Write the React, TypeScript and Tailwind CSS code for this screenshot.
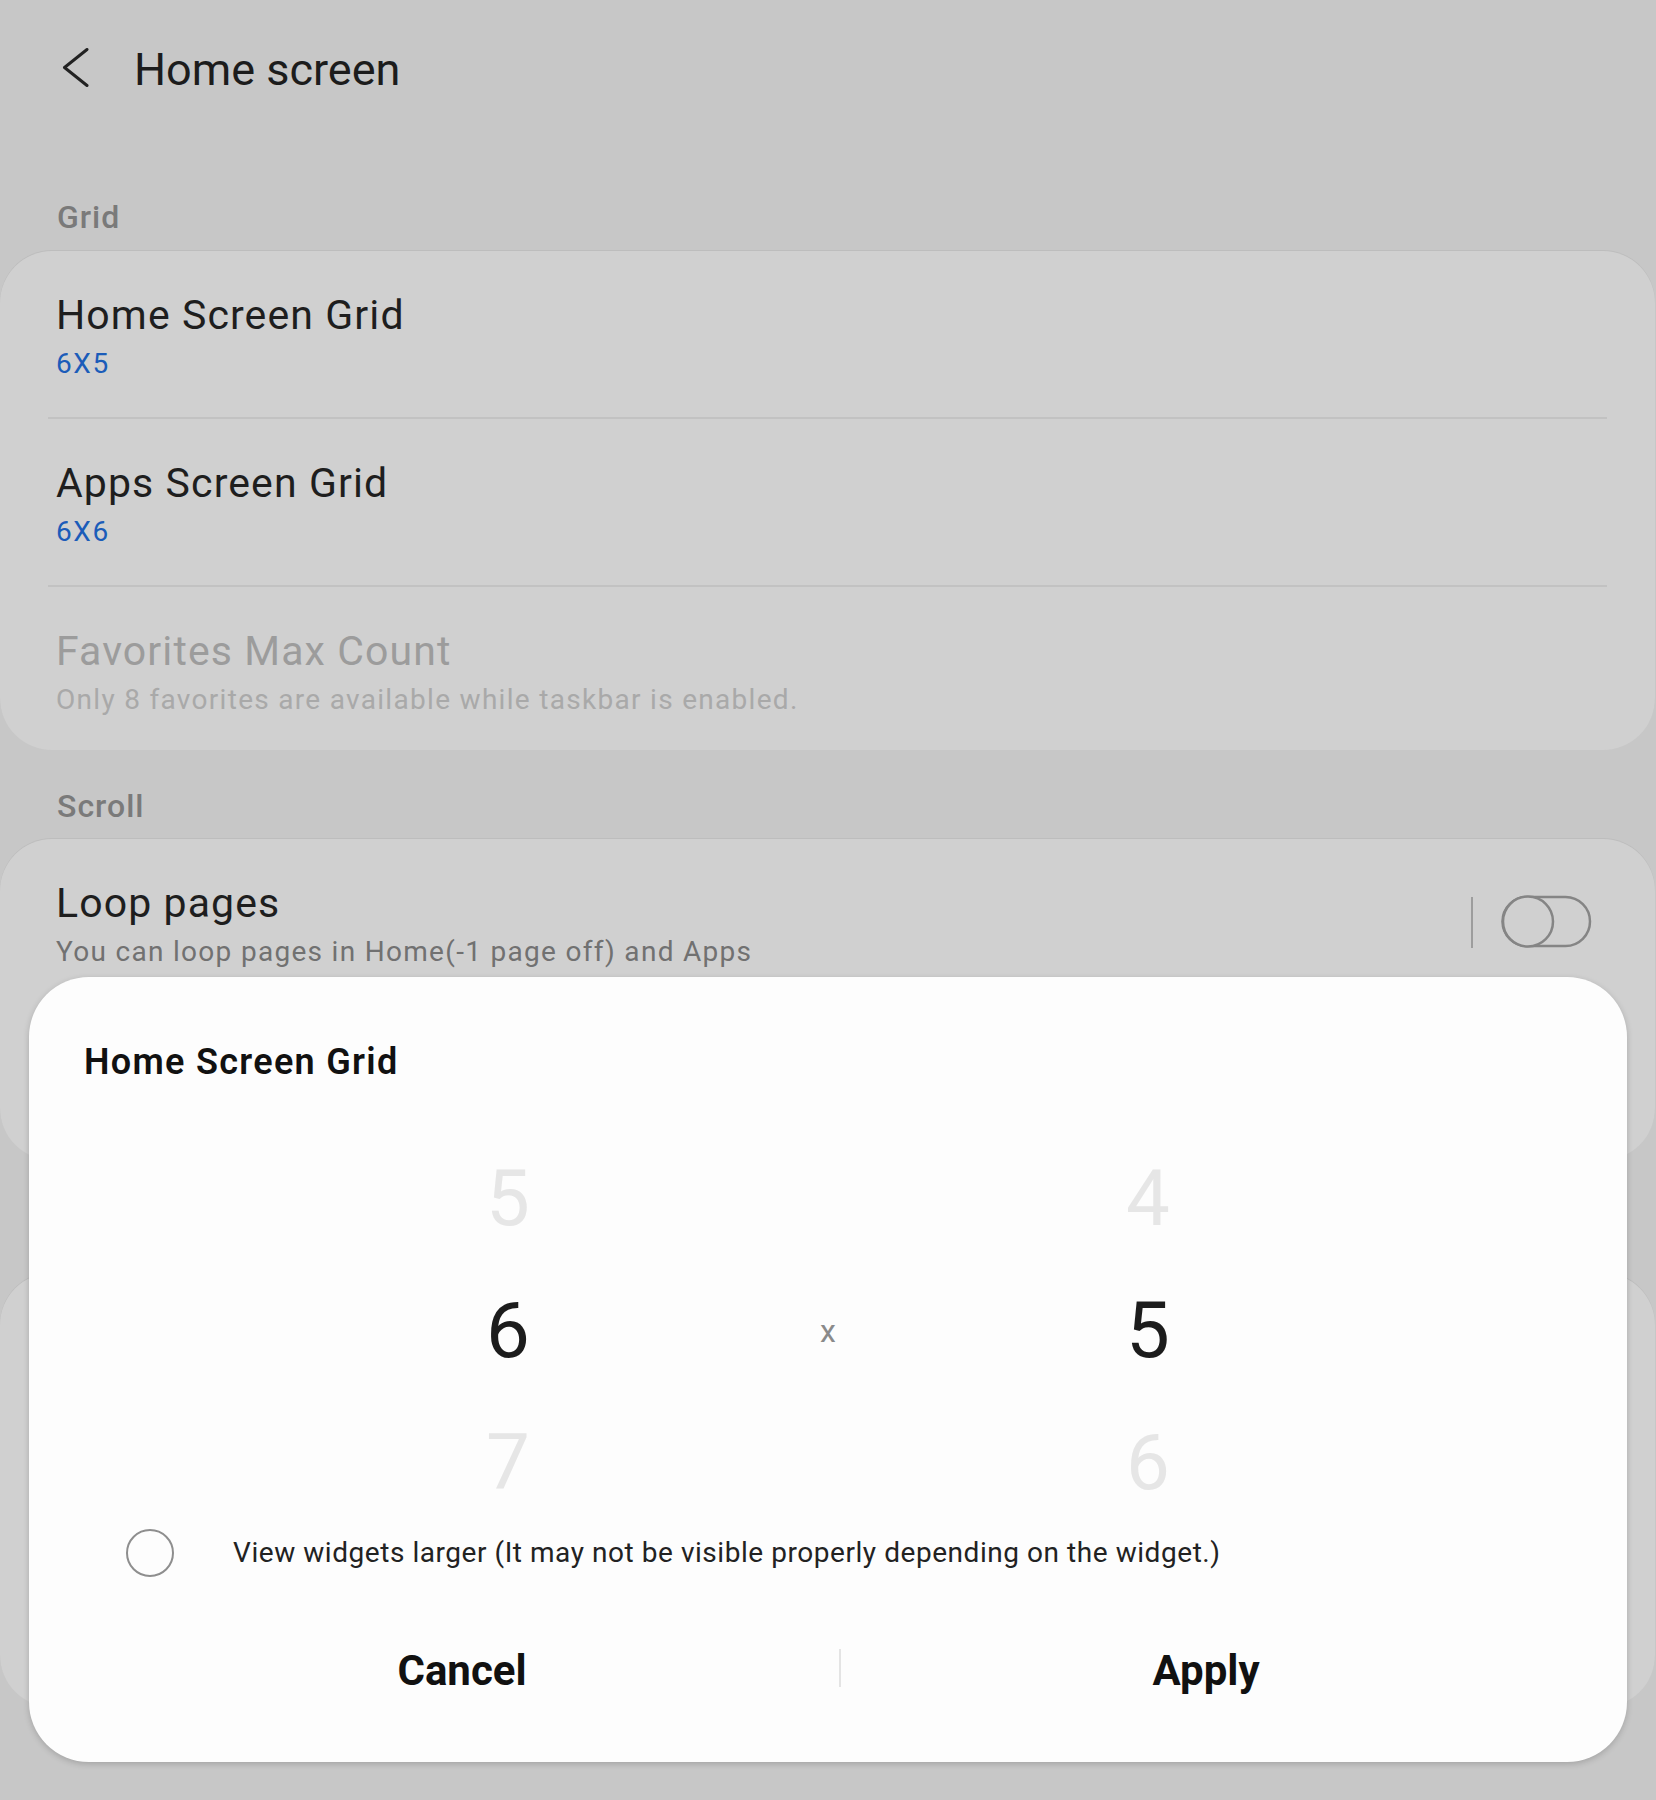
export default function App() {
  return (
    <div className="relative w-[1656px] h-[1800px] overflow-hidden bg-[#c7c7c7] font-[Roboto,sans-serif]">
      {/* Header */}
      <div className="flex items-start pt-[44px] h-[96px]">
        <svg className="ml-[62px] mt-[4px] w-[28px] h-[40px]" viewBox="0 0 28 40">
          <polyline points="25,1.5 2.5,19.5 25,37.5" fill="none" stroke="#222" strokeWidth="3" strokeLinecap="round" strokeLinejoin="round" />
        </svg>
        <h1 className="ml-[44px] text-[45px] leading-[52px] text-[#1c1c1c]">Home screen</h1>
      </div>

      {/* Grid section */}
      <div className="mt-[101px] pl-[57px] text-[32px] leading-[40px] font-medium tracking-[1px] text-[#7a7a7a]">Grid</div>
      <div className="mt-[14px] w-[1655px] h-[499px] rounded-[52px] bg-[#d0d0d0] shadow-[0_-1px_0_0_#bdbdbd] overflow-hidden">
        <div className="h-[166px] pt-[40px] pl-[56px]">
          <div className="text-[41px] leading-[48px] tracking-[1.1px] text-[#1e1e1e]">Home Screen Grid</div>
          <div className="mt-[7px] text-[28px] leading-[36px] tracking-[1.6px] text-[#1b5cb9]">6X5</div>
        </div>
        <div className="mx-[48px] h-[2px] bg-[#c2c2c2]" />
        <div className="h-[166px] pt-[40px] pl-[56px]">
          <div className="text-[41px] leading-[48px] tracking-[1.1px] text-[#1e1e1e]">Apps Screen Grid</div>
          <div className="mt-[7px] text-[28px] leading-[36px] tracking-[1.6px] text-[#1b5cb9]">6X6</div>
        </div>
        <div className="mx-[48px] h-[2px] bg-[#c2c2c2]" />
        <div className="h-[166px] pt-[40px] pl-[56px]">
          <div className="text-[41px] leading-[48px] tracking-[1.1px] text-[#9c9c9c]">Favorites Max Count</div>
          <div className="mt-[7px] text-[28px] leading-[36px] tracking-[1.3px] text-[#a9a9a9]">Only 8 favorites are available while taskbar is enabled.</div>
        </div>
      </div>

      {/* Scroll section */}
      <div className="mt-[36px] pl-[57px] text-[32px] leading-[40px] font-medium tracking-[1px] text-[#7a7a7a]">Scroll</div>
      <div className="mt-[13px] w-[1655px] h-[321px] rounded-[52px] bg-[#d0d0d0] shadow-[0_-1px_0_0_#bdbdbd] overflow-hidden">
        <div className="flex items-start justify-between pl-[56px] pr-[61px]">
          <div className="pt-[40px]">
            <div className="text-[41px] leading-[48px] tracking-[1.1px] text-[#1e1e1e]">Loop pages</div>
            <div className="mt-[7px] text-[28px] leading-[36px] tracking-[1.3px] text-[#717171]">You can loop pages in Home(-1 page off) and Apps</div>
          </div>
          <div className="mt-[55px] flex items-center">
            <div className="w-[2px] h-[51px] bg-[#9d9d9d]" />
            <svg className="ml-[27px] w-[94px] h-[56px]" viewBox="0 0 94 56">
              <rect x="2.5" y="3" width="87.5" height="49" rx="24.5" fill="none" stroke="#858585" strokeWidth="2.5" />
              <circle cx="28" cy="27.5" r="25" fill="#d0d0d0" stroke="#858585" strokeWidth="2.5" />
            </svg>
          </div>
        </div>
      </div>
      <div className="mt-[113px] w-[1655px] h-[434px] rounded-[52px] bg-[#d0d0d0] shadow-[0_-1px_0_0_#bdbdbd]" />

      {/* Dialog */}
      <div className="absolute left-[29px] top-[977px] w-[1598px] h-[785px] rounded-[60px] bg-[#fdfdfd] shadow-[0_2px_6px_rgba(0,0,0,0.18)]">
        <div className="pt-[63px] pl-[55px] text-[36px] leading-[44px] font-semibold tracking-[1.3px] text-[#111]">Home Screen Grid</div>
        <div className="mt-[49px] flex justify-center">
          <div className="w-[200px] flex flex-col items-center text-[78px] leading-[132px]">
            <div className="text-[#e6e6e6]">5</div>
            <div className="text-[#1c1c1c]">6</div>
            <div className="text-[#e6e6e6]">7</div>
          </div>
          <div className="w-[440px] flex flex-col items-center">
            <div className="h-[132px]" />
            <div className="h-[132px] text-[32px] leading-[132px] text-[#8a8a8a]">x</div>
            <div className="h-[132px]" />
          </div>
          <div className="w-[200px] flex flex-col items-center text-[78px] leading-[132px]">
            <div className="text-[#e6e6e6]">4</div>
            <div className="text-[#1c1c1c]">5</div>
            <div className="text-[#e6e6e6]">6</div>
          </div>
        </div>
        <div className="h-[48px] flex items-center pl-[97px]">
          <div className="w-[48px] h-[48px] rounded-full border-[2.5px] border-[#8e8e8e]" />
          <div className="ml-[59px] text-[28px] leading-[36px] tracking-[0.55px] text-[#222]">View widgets larger (It may not be visible properly depending on the widget.)</div>
        </div>
        <div className="mt-[54px] h-[80px] flex items-center pl-[56px]">
          <div className="w-[754px] text-center text-[42px] leading-[80px] font-bold text-[#111]">Cancel</div>
          <div className="w-[2px] h-[38px] -mt-[6px] bg-[#e4e4e4]" />
          <div className="w-[730px] text-center text-[42px] leading-[80px] font-bold text-[#111]">Apply</div>
        </div>
      </div>
    </div>
  );
}
